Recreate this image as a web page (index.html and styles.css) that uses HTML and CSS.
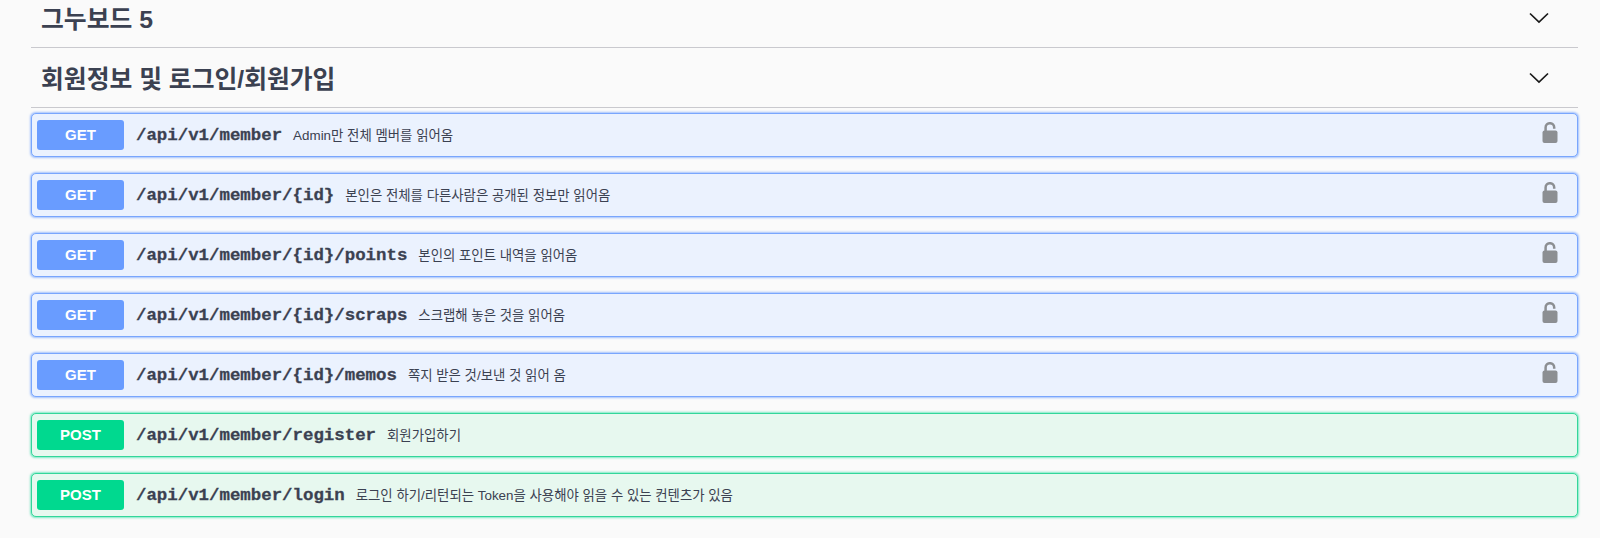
FILE: index.html
```html
<!DOCTYPE html>
<html lang="ko">
<head>
<meta charset="UTF-8">
<meta name="viewport" content="width=device-width, initial-scale=1.0">
<title>API 문서</title>
<link rel="stylesheet" href="styles.css">
</head>
<body>

<svg class="sprites" width="0" height="0">
  <symbol id="chevron" viewBox="0 0 20 20">
    <path d="M1 5.5 L10 14 L19 5.5" fill="none" stroke="currentColor" stroke-width="1.7"/>
  </symbol>
  <symbol id="lock" viewBox="0 0 16 21">
    <path d="M3.6 10 V5.5 a4.3 4.3 0 0 1 8.6 0 V6.8" fill="none" stroke="currentColor" stroke-width="2.5"/>
    <rect x="0.5" y="8.5" width="15" height="12.5" rx="2" fill="currentColor"/>
  </symbol>
</svg>

<div class="container">
  <div class="tag">
    <h3>그누보드 5</h3>
    <svg class="chevron"><use href="#chevron"/></svg>
  </div>
  <div class="tag">
    <h3>회원정보 및 로그인/회원가입</h3>
    <svg class="chevron"><use href="#chevron"/></svg>
  </div>

  <div class="operations">
    <div class="op op-get">
      <span class="method">GET</span>
      <span class="path">/api/v1/member</span>
      <span class="desc">Admin만 전체 멤버를 읽어옴</span>
      <svg class="lock"><use href="#lock"/></svg>
    </div>
    <div class="op op-get">
      <span class="method">GET</span>
      <span class="path">/api/v1/member/{id}</span>
      <span class="desc">본인은 전체를 다른사람은 공개된 정보만 읽어옴</span>
      <svg class="lock"><use href="#lock"/></svg>
    </div>
    <div class="op op-get">
      <span class="method">GET</span>
      <span class="path">/api/v1/member/{id}/points</span>
      <span class="desc">본인의 포인트 내역을 읽어옴</span>
      <svg class="lock"><use href="#lock"/></svg>
    </div>
    <div class="op op-get">
      <span class="method">GET</span>
      <span class="path">/api/v1/member/{id}/scraps</span>
      <span class="desc">스크랩해 놓은 것을 읽어옴</span>
      <svg class="lock"><use href="#lock"/></svg>
    </div>
    <div class="op op-get">
      <span class="method">GET</span>
      <span class="path">/api/v1/member/{id}/memos</span>
      <span class="desc">쪽지 받은 것/보낸 것 읽어 옴</span>
      <svg class="lock"><use href="#lock"/></svg>
    </div>
    <div class="op op-post">
      <span class="method">POST</span>
      <span class="path">/api/v1/member/register</span>
      <span class="desc">회원가입하기</span>
    </div>
    <div class="op op-post">
      <span class="method">POST</span>
      <span class="path">/api/v1/member/login</span>
      <span class="desc">로그인 하기/리턴되는 Token을 사용해야 읽을 수 있는 컨텐츠가 있음</span>
    </div>
  </div>
</div>

</body>
</html>
```

FILE: styles.css
```css
html, body {
  height: 100%;
  overflow: hidden;
}

body {
  font-family: "Liberation Sans", "Noto Sans CJK KR", sans-serif;
  margin: 0;
  padding: 0;
  background-color: #fafafa;
  color: #3b4151;
}

.sprites {
  display: block;
}

.container {
  margin: -12px 22px 0 31px;
}

.tag {
  display: flex;
  align-items: center;
  justify-content: space-between;
  box-sizing: content-box;
  height: 57px;
  padding: 0 29px 2px 10px;
  border-bottom: 1px solid #c9c9ce;
}

.tag h3 {
  margin: 0;
  font-size: 24.8px;
  font-weight: 700;
}

.chevron {
  width: 20px;
  height: 20px;
  margin-top: 3px;
  color: #1a1a1a;
}

.operations {
  padding-top: 5px;
}

.op {
  display: flex;
  align-items: center;
  box-sizing: border-box;
  height: 44px;
  margin-bottom: 16px;
  padding: 0 5px;
  border-radius: 5px;
  border: 1px solid;
}

.op-get {
  background-color: #ebf2fe;
  border-color: #79a6fd;
  box-shadow: 0 0 2px 0.5px rgba(105, 156, 255, 0.6);
}

.op-post {
  background-color: #e7f8ef;
  border-color: #34d69a;
  box-shadow: 0 0 2px 0.5px rgba(0, 217, 143, 0.5);
}

.method {
  flex: none;
  width: 87px;
  height: 30px;
  line-height: 30px;
  margin-right: 12px;
  text-align: center;
  color: #fff;
  font-size: 15px;
  font-weight: 700;
  border-radius: 3px;
}

.op-get .method {
  background-color: #699cff;
}

.op-post .method {
  background-color: #00d98f;
}

.path {
  font-family: "Liberation Mono", monospace;
  font-size: 17.4px;
  font-weight: 700;
  -webkit-text-stroke: 0.3px #3b4151;
}

.desc {
  margin-left: 11px;
  margin-bottom: 3px;
  font-size: 13.4px;
  color: #3b4151;
}

.lock {
  width: 16px;
  height: 21px;
  margin-left: auto;
  margin-right: 14px;
  margin-bottom: 5px;
  color: #8c8f92;
}
```
